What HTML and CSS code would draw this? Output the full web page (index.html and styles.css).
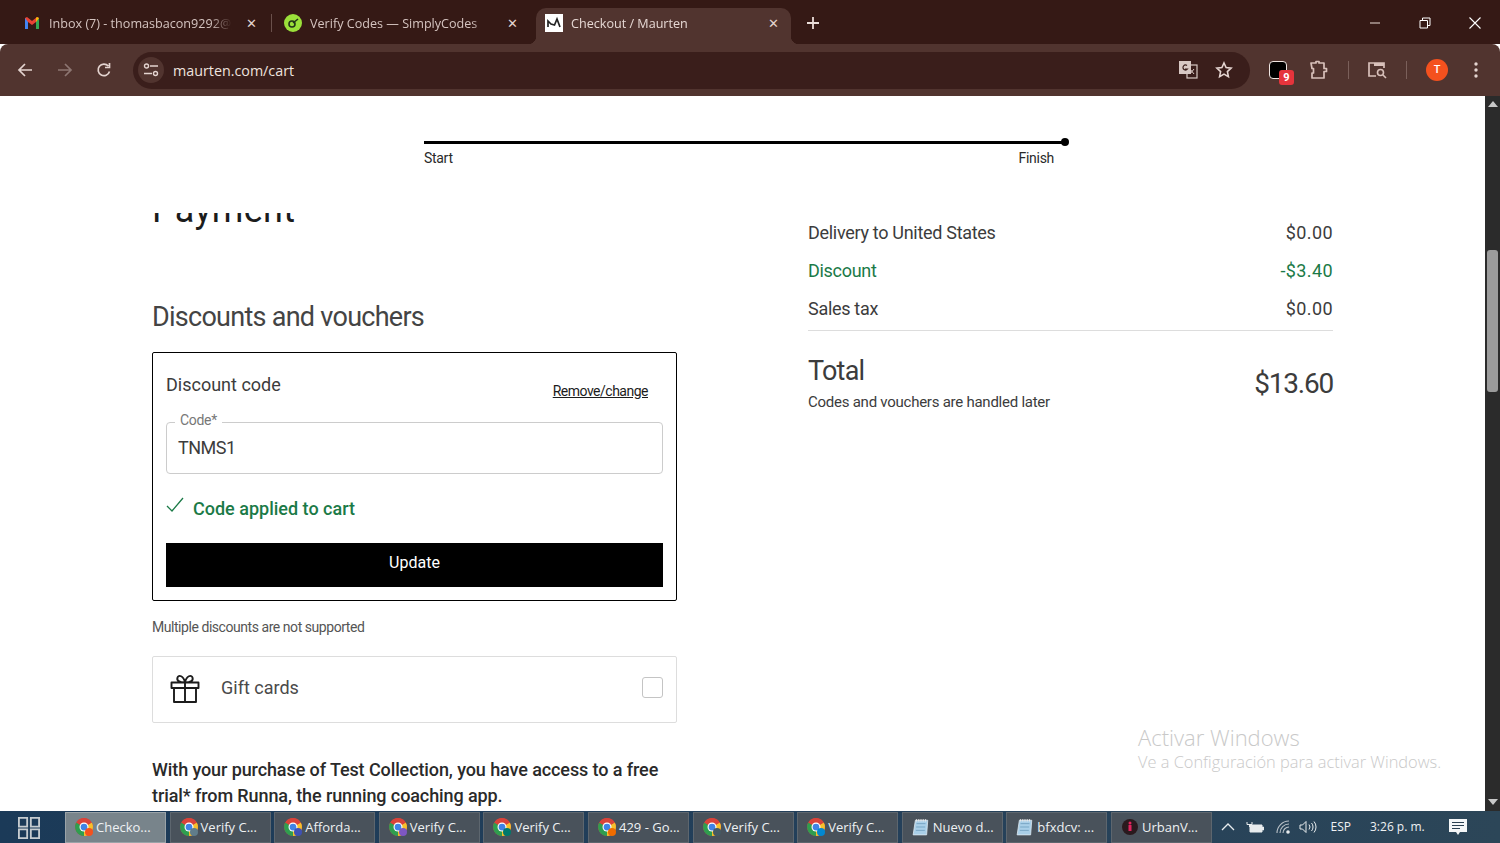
FILE: index.html
```html
<!DOCTYPE html>
<html lang="en">
<head>
  <meta charset="UTF-8">
  <meta name="viewport" content="width=device-width, initial-scale=1.0">
  <title>Checkout / Maurten</title>
  <link rel="stylesheet" href="styles.css">
</head>
<body>

  <svg class="defs" width="0" height="0">
    <symbol id="chrome-logo" viewBox="0 0 16 16">
      <circle cx="8" cy="8" r="8" fill="#d9433a"/>
      <path d="M8 8 1.1 4A8 8 0 0 0 8 16Z" fill="#2f9e4f"/>
      <path d="M8 8 8 16A8 8 0 0 0 14.9 4Z" fill="#f6c02c"/>
      <path d="M8 8 1.1 4A8 8 0 0 1 14.9 4Z" fill="#d9433a"/>
      <circle cx="8" cy="8" r="4" fill="#fff"/>
      <circle cx="8" cy="8" r="3" fill="#3f83e6"/>
    </symbol>
    <symbol id="notepad" viewBox="0 0 16 16">
      <path d="M3 2h11l-1 13H1Z" fill="#a9cfe8" stroke="#dfeaf2" stroke-width=".7"/>
      <path d="M4 5h8M3.7 8h8M3.4 11h8" stroke="#6d9cbc" stroke-width=".7"/>
      <path d="M4 1v2M6 1v2M8 1v2M10 1v2M12 1v2" stroke="#e8e8e8"/>
    </symbol>
  </svg>

  <!-- Browser chrome -->
  <div class="tabstrip">
    <div class="tab">
      <svg class="favicon" viewBox="0 0 18 18"><path d="M2 4v11h3V8l4 3 4-3v7h3V4l-2-1-5 4-5-4Z" fill="#ea4335"/><path d="M2 4v11h3V8Z" fill="#4285f4"/><path d="M16 4v11h-3V8Z" fill="#34a853"/><path d="M13 8l3-4-2-1-1 1Z" fill="#fbbc04"/></svg>
      <span class="tab-title">Inbox (7) - thomasbacon9292@gmail.com</span>
      <span class="tab-close">✕</span>
    </div>
    <span class="tab-sep"></span>
    <div class="tab">
      <svg class="favicon" viewBox="0 0 18 18"><circle cx="9" cy="9" r="9" fill="#9be03a"/><circle cx="8" cy="10" r="3" fill="none" stroke="#24331a" stroke-width="1.6"/><path d="M9 9l5-4" stroke="#24331a" stroke-width="1.6"/></svg>
      <span class="tab-title">Verify Codes — SimplyCodes</span>
      <span class="tab-close">✕</span>
    </div>
    <div class="tab tab-active">
      <svg class="favicon" viewBox="0 0 18 18"><rect width="18" height="18" fill="#fff"/><path d="M3 13V7l3 3 3.5 1L12 5l3 8" fill="none" stroke="#222" stroke-width="1.7"/></svg>
      <span class="tab-title">Checkout / Maurten</span>
      <span class="tab-close">✕</span>
    </div>
    <svg class="new-tab" width="12" height="12" viewBox="0 0 12 12"><path d="M6 0v12M0 6h12" stroke="#eadcd8" stroke-width="1.8"/></svg>
    <div class="window-controls">
      <svg width="12" height="12" viewBox="0 0 12 12"><path d="M1 6h10" stroke="#cdbcb8" stroke-width="1.2"/></svg>
      <svg width="12" height="12" viewBox="0 0 12 12"><path d="M1 3.5h7.5V11H1ZM3.5 3.5V1H11v7.5H8.5" fill="none" stroke="#fff" stroke-width="1"/></svg>
      <svg width="12" height="12" viewBox="0 0 12 12"><path d="M.5.5l11 11M11.500.5l-11 11" stroke="#fff" stroke-width="1.1"/></svg>
    </div>
  </div>

  <div class="toolbar">
    <div class="nav-icons">
      <svg width="16" height="16" viewBox="0 0 16 16"><path d="M15 8H2M8 2 2 8l6 6" fill="none" stroke="#e4d4d0" stroke-width="1.7"/></svg>
      <svg width="16" height="16" viewBox="0 0 16 16"><path d="M1 8h13M8 2l6 6-6 6" fill="none" stroke="#8d7672" stroke-width="1.7"/></svg>
      <svg width="16" height="16" viewBox="0 0 16 16"><path d="M13.500 9.500A5.800 5.800 0 1 1 12.300 4M13.500 1v4.500H9" fill="none" stroke="#e4d4d0" stroke-width="1.7"/></svg>
    </div>
    <div class="omnibox">
      <span class="site-chip">
        <svg width="16" height="14" viewBox="0 0 16 14"><circle cx="3.500" cy="3" r="2" fill="none" stroke="#e4d4d0" stroke-width="1.400"/><path d="M7 3h8M1 10.500h8" stroke="#e4d4d0" stroke-width="1.400"/><circle cx="12.500" cy="10.500" r="2" fill="none" stroke="#e4d4d0" stroke-width="1.400"/></svg>
      </span>
      <span class="url">maurten.com/cart</span>
      <svg class="translate" width="20" height="20" viewBox="0 0 20 20"><rect x="9" y="5" width="10" height="13" fill="#3a1e1b" stroke="#d8c8c4" stroke-width="1.200"/><rect x="1" y="1" width="12" height="13" fill="#d8c8c4"/><path d="M9 5.500A2.500 2.500 0 1 0 9.500 9H7" fill="none" stroke="#3a1e1b" stroke-width="1.200"/><path d="M12 9l4 5M16 9l-4 5" stroke="#d8c8c4"/></svg>
      <svg class="star" width="18" height="18" viewBox="0 0 18 18"><path d="M9 2l2.100 4.600 5 .6-3.700 3.400 1 5L9 13.100l-4.400 2.500 1-5L1.900 7.200l5-.6Z" fill="none" stroke="#e4d4d0" stroke-width="1.600"/></svg>
    </div>
    <div class="ext-icon">
      <span class="ext-box"></span>
      <span class="ext-badge">9</span>
    </div>
    <svg class="puzzle" width="20" height="20" viewBox="0 0 20 20"><path d="M2 3h5V1.500h3V3h5v5.500h2.500v3H15V18H3v-5h1.500V8.500H3Z" fill="none" stroke="#d8c0ba" stroke-width="1.700" stroke-linejoin="round"/></svg>
    <span class="tool-sep tool-sep-a"></span>
    <svg class="panel" width="20" height="18" viewBox="0 0 20 18"><path d="M9 15H2V2h15v5" fill="none" stroke="#d8c0ba" stroke-width="1.700"/><path d="M7 2h10v3H7Z" fill="#d8c0ba"/><circle cx="13.500" cy="11.500" r="3" fill="none" stroke="#d8c0ba" stroke-width="1.600"/><path d="M16 14l3 3" stroke="#d8c0ba" stroke-width="1.600"/></svg>
    <span class="tool-sep tool-sep-b"></span>
    <span class="avatar">T</span>
    <svg class="kebab" width="4" height="16" viewBox="0 0 4 16"><circle cx="2" cy="2" r="1.700" fill="#e4d4d0"/><circle cx="2" cy="8" r="1.700" fill="#e4d4d0"/><circle cx="2" cy="14" r="1.700" fill="#e4d4d0"/></svg>
  </div>

  <!-- Page -->
  <div class="viewport">
    <div class="page">

      <div class="progress">
        <div class="progress-line"></div>
        <div class="progress-labels">
          <span>Start</span>
          <span>Finish</span>
        </div>
      </div>

      <div class="checkout">
        <div class="checkout-left">
          <div class="payment-clip">
            <h1>Payment</h1>
          </div>

          <h2>Discounts and vouchers</h2>

          <div class="discount-box">
            <div class="discount-head">
              <span class="discount-title">Discount code</span>
              <a class="remove-link" href="#">Remove/change</a>
            </div>
            <div class="code-field">
              <span class="code-label">Code*</span>
              <span class="code-value">TNMS1</span>
            </div>
            <div class="code-status">
              <svg width="18" height="16" viewBox="0 0 18 16"><path d="M1 9l5 5L17 1" fill="none" stroke="#1b7a47" stroke-width="1.300"/></svg>
              <span>Code applied to cart</span>
            </div>
            <button class="update-btn">Update</button>
          </div>

          <p class="note">Multiple discounts are not supported</p>

          <div class="gift-row">
            <svg class="gift-icon" width="30" height="30" viewBox="0 0 30 30"><path d="M4 14v14h22V14M1.500 8.500h27V14h-27ZM15 8.500V28M15 8.500C9 8.500 6.500 6.500 7.500 3.500S13.500 1.500 15 8.500C16.500 1.500 21.500.5 22.500 3.500S21 8.500 15 8.500Z" fill="none" stroke="#1c1c1c" stroke-width="1.900" stroke-linejoin="round"/></svg>
            <span class="gift-label">Gift cards</span>
            <span class="gift-check"></span>
          </div>

          <p class="promo">With your purchase of Test Collection, you have access to a free<br>trial* from Runna, the running coaching app.</p>
        </div>

        <div class="checkout-right">
          <div class="summary-row"><span>Delivery to United States</span><span class="amount">$0.00</span></div>
          <div class="summary-row discount"><span>Discount</span><span class="amount">-$3.40</span></div>
          <div class="summary-row"><span>Sales tax</span><span class="amount">$0.00</span></div>
          <div class="summary-total">
            <div>
              <div class="total-label">Total</div>
              <div class="total-note">Codes and vouchers are handled later</div>
            </div>
            <div class="total-amount">$13.60</div>
          </div>
        </div>
      </div>

      <div class="activate">
        <div class="activate-title">Activar Windows</div>
        <div class="activate-text">Ve a Configuración para activar Windows.</div>
      </div>
    </div>

    <div class="scrollbar">
      <span class="arrow-up"></span>
      <span class="thumb"></span>
      <span class="arrow-down"></span>
    </div>
  </div>

  <!-- Taskbar -->
  <div class="taskbar">
    <svg class="start" width="22" height="22" viewBox="0 0 24 24"><path d="M1 1h9v9.500H1ZM14 1h9v9.500h-9ZM1 13.500h9V23H1ZM14 13.500h9V23h-9Z" fill="none" stroke="#c6ccd0" stroke-width="2"/></svg>
    <div class="task task-active"><span class="app"><svg width="18" height="18"><use href="#chrome-logo"/></svg><i style="background:#f4511e"></i></span>Checko...</div>
    <div class="task"><span class="app"><svg width="18" height="18"><use href="#chrome-logo"/></svg><i style="background:#607d8b"></i></span>Verify C...</div>
    <div class="task"><span class="app"><svg width="18" height="18"><use href="#chrome-logo"/></svg><i style="background:#3f51b5"></i></span>Afforda...</div>
    <div class="task"><span class="app"><svg width="18" height="18"><use href="#chrome-logo"/></svg><i style="background:#7e57c2"></i></span>Verify C...</div>
    <div class="task"><span class="app"><svg width="18" height="18"><use href="#chrome-logo"/></svg><i style="background:#00796b"></i></span>Verify C...</div>
    <div class="task"><span class="app"><svg width="18" height="18"><use href="#chrome-logo"/></svg><i style="background:#ef6c00"></i></span>429 - Go...</div>
    <div class="task"><span class="app"><svg width="18" height="18"><use href="#chrome-logo"/></svg><i style="background:#455a64"></i></span>Verify C...</div>
    <div class="task"><span class="app"><svg width="18" height="18"><use href="#chrome-logo"/></svg><i style="background:#0288d1"></i></span>Verify C...</div>
    <div class="task"><span class="app"><svg width="18" height="18"><use href="#notepad"/></svg></span>Nuevo d...</div>
    <div class="task"><span class="app"><svg width="18" height="18"><use href="#notepad"/></svg></span>bfxdcv: ...</div>
    <div class="task"><span class="app"><svg width="18" height="18" viewBox="0 0 18 18"><circle cx="9" cy="9" r="8" fill="#2a1a1e"/><rect x="7.500" y="7" width="3" height="6" fill="#e0245e"/><circle cx="9" cy="5" r="1.500" fill="#e0245e"/></svg></span>UrbanV...</div>
    <div class="tray">
      <svg class="tray-chevron" width="14" height="8" viewBox="0 0 14 8"><path d="M1 7l6-6 6 6" fill="none" stroke="#e8ecee" stroke-width="1.300"/></svg>
      <svg class="tray-battery" width="18" height="12" viewBox="0 0 18 12"><path d="M4 4h12v7H4Z" fill="#e8ecee" stroke="#e8ecee"/><path d="M16.500 6h1v3h-1ZM1 1v2.500h5V1M3.500 3.500V6" fill="none" stroke="#e8ecee"/></svg>
      <svg class="tray-wifi" width="16" height="14" viewBox="0 0 16 14"><path d="M1 13A12 12 0 0 1 13 1M4 13a9 9 0 0 1 9-9M7 13a6 6 0 0 1 6-6" fill="none" stroke="#b9c2c8" stroke-width="1.100"/><circle cx="12" cy="12" r="1.800" fill="#e8ecee"/></svg>
      <svg class="tray-volume" width="18" height="14" viewBox="0 0 18 14"><path d="M1 5h2.500L7 1.500v11L3.500 9H1Z" fill="none" stroke="#e8ecee"/><path d="M10 4.500a4 4 0 0 1 0 5M12.500 3a6 6 0 0 1 0 8M15 1.500a8.500 8.500 0 0 1 0 11" fill="none" stroke="#e8ecee"/></svg>
      <span class="tray-lang">ESP</span>
      <span class="tray-time">3:26 p. m.</span>
      <svg class="tray-notes" width="18" height="18" viewBox="0 0 18 18"><path d="M0 1h18v13h-7l-2 3-2-3H0Z" fill="#f4f6f7"/><path d="M3 4.500h12M3 7.500h12M3 10.500h8" stroke="#2a3f50" stroke-width="1.200"/></svg>
    </div>
  </div>

</body>
</html>
```

FILE: styles.css
```css
* {
  box-sizing: border-box;
}
html, body {
  height: 100%;
}
body {
  display: flex;
  flex-direction: column;
  margin: 0;
  height: 843px;
  overflow: hidden;
  font-family: Roboto, Arial, sans-serif;
  color: #3c3c3c;
  background: #fff;
}
.defs {
  position: absolute;
}

/* Tab strip */
.tabstrip {
  display: flex;
  align-items: flex-end;
  flex: 0 0 44px;
  padding-left: 14px;
  background: #351915;
  font-family: "Open Sans", Arial, sans-serif;
}
.tab {
  display: flex;
  align-items: center;
  width: 255px;
  height: 36px;
  margin-right: 6px;
  padding: 0 0 6px 9px;
  color: #d5c4c0;
  font-size: 12.600px;
}
.favicon {
  flex: 0 0 18px;
  width: 18px;
  height: 18px;
  margin-right: 8px;
}
.tab-title {
  width: 183px;
  overflow: hidden;
  white-space: nowrap;
  -webkit-mask-image: linear-gradient(to right, #000 88%, transparent);
  mask-image: linear-gradient(to right, #000 88%, transparent);
}
.tab-close {
  width: 12px;
  margin-left: 13px;
  color: #e4d4d0;
  font-size: 13px;
  line-height: 1;
  text-align: center;
}
.tab-sep {
  width: 1px;
  height: 18px;
  margin: 0 3px 12px -4px;
  background: #6a504b;
}
.tab-active {
  position: relative;
  background: #51342f;
  border-radius: 10px 10px 0 0;
  color: #e6d8d4;
}
.tab-active::before,
.tab-active::after {
  content: "";
  position: absolute;
  bottom: 0;
  width: 8px;
  height: 8px;
}
.tab-active::before {
  left: -8px;
  background: radial-gradient(circle at 0 0, transparent 8px, #51342f 8.5px);
}
.tab-active::after {
  right: -8px;
  background: radial-gradient(circle at 100% 0, transparent 8px, #51342f 8.5px);
}
.new-tab {
  margin: 0 0 15px 10px;
}
.window-controls {
  display: flex;
  gap: 38px;
  margin: 0 19px 15px auto;
}

/* Toolbar */
.toolbar {
  display: flex;
  align-items: center;
  flex: 0 0 52px;
  padding-left: 17px;
  background: #51342f;
  border-radius: 8px 8px 0 0;
}
.nav-icons {
  display: flex;
  gap: 23.500px;
}
.omnibox {
  display: flex;
  align-items: center;
  width: 1117px;
  height: 37px;
  margin-left: 21px;
  padding-left: 5px;
  background: #3a1e1b;
  border-radius: 19px;
}
.site-chip {
  display: flex;
  align-items: center;
  justify-content: center;
  width: 26px;
  height: 26px;
  background: #51342f;
  border-radius: 50%;
}
.url {
  margin-left: 9px;
  color: #efe3df;
  font-family: "Open Sans", Arial, sans-serif;
  font-size: 14.300px;
}
.translate {
  margin-left: auto;
}
.star {
  margin: 0 17px 0 17px;
}
.ext-icon {
  position: relative;
  width: 18px;
  height: 18px;
  margin-left: 19px;
}
.ext-box {
  display: block;
  width: 18px;
  height: 18px;
  background: #000;
  border: 1.500px solid #f0e6e3;
  border-radius: 4px;
}
.ext-badge {
  position: absolute;
  top: 9px;
  left: 10px;
  width: 15px;
  height: 15px;
  background: #e5343c;
  border-radius: 3px;
  color: #fff;
  font-size: 11px;
  font-weight: 700;
  line-height: 15px;
  text-align: center;
}
.puzzle {
  margin-left: 22px;
}
.tool-sep {
  width: 1px;
  height: 18px;
  background: #7a5f5a;
}
.tool-sep-a {
  margin-left: 19px;
}
.panel {
  margin-left: 18px;
}
.tool-sep-b {
  margin-left: 19px;
}
.avatar {
  width: 22px;
  height: 22px;
  margin-left: 19px;
  background: #f4511e;
  border-radius: 50%;
  color: #fff;
  font-size: 11px;
  font-weight: 500;
  line-height: 22px;
  text-align: center;
}
.kebab {
  margin-left: 26px;
}

/* Viewport */
.viewport {
  display: flex;
  flex: 0 0 715px;
  overflow: hidden;
}
.page {
  position: relative;
  flex: 1;
  overflow: hidden;
}
.scrollbar {
  display: flex;
  flex-direction: column;
  align-items: center;
  flex: 0 0 15px;
  padding: 5px 0 6px;
  background: #2b2b2b;
}
.arrow-up {
  border: 5px solid transparent;
  border-top: 0;
  border-bottom: 6px solid #c8c8c8;
}
.arrow-down {
  margin-top: auto;
  border: 5px solid transparent;
  border-bottom: 0;
  border-top: 6px solid #c8c8c8;
}
.thumb {
  width: 11px;
  height: 142px;
  margin-top: 143px;
  background: #9b9b9b;
  border-radius: 3px;
}

/* Progress */
.progress {
  height: 116px;
  padding: 45px 0 0 424px;
}
.progress-line {
  position: relative;
  width: 641px;
  height: 3px;
  background: #000;
}
.progress-line::after {
  content: "";
  position: absolute;
  top: -3px;
  right: -4px;
  width: 8px;
  height: 8px;
  background: #000;
  border-radius: 50%;
}
.progress-labels {
  display: flex;
  justify-content: space-between;
  width: 630px;
  margin-top: 5px;
  color: #2a2a2a;
  font-size: 14px;
  line-height: 18px;
  letter-spacing: -0.3px;
}

/* Checkout columns */
.checkout {
  display: flex;
  gap: 131px;
  padding-left: 152px;
}
.checkout-left,
.checkout-right {
  flex: 0 0 525px;
}
.payment-clip {
  display: flex;
  align-items: flex-end;
  height: 20px;
  margin-top: 1px;
  overflow: hidden;
}
h1 {
  flex-shrink: 0;
  margin: 0 0 3px;
  color: #1c1c1c;
  font-size: 36px;
  font-weight: 400;
  line-height: 40px;
  letter-spacing: 0.3px;
}
h2 {
  margin: 67px 0 18px;
  color: #444;
  font-size: 27px;
  font-weight: 400;
  line-height: 34px;
  letter-spacing: -0.73px;
}
.discount-box {
  height: 249px;
  padding: 14px 13px 13px;
  border: 1px solid #000;
  border-radius: 2px;
}
.discount-head {
  display: flex;
  justify-content: space-between;
}
.discount-title {
  font-size: 18px;
  line-height: 36px;
}
.remove-link {
  margin: 14px 15px 0 0;
  color: #1c1c1c;
  font-size: 14px;
  line-height: 20px;
  letter-spacing: -0.5px;
}
.code-field {
  position: relative;
  height: 52px;
  margin-top: 19px;
  padding: 0 11px;
  border: 1px solid #ccc;
  border-radius: 4px;
  font-size: 18px;
  line-height: 50px;
  letter-spacing: -0.5px;
}
.code-label {
  position: absolute;
  top: -12px;
  left: 8px;
  padding: 0 5px;
  background: #fff;
  color: #777;
  font-size: 14px;
  line-height: 18px;
  letter-spacing: -0.3px;
}
.code-status {
  display: flex;
  gap: 9px;
  height: 24px;
  margin-top: 23px;
  color: #1b7a47;
  font-size: 18px;
  font-weight: 500;
  line-height: 24px;
}
.update-btn {
  display: block;
  width: 100%;
  height: 44px;
  margin-top: 22px;
  padding-bottom: 6px;
  background: #000;
  border: none;
  color: #fff;
  font-family: inherit;
  font-size: 16px;
  font-weight: 400;
  cursor: pointer;
}
.note {
  margin: 16px 0 19px;
  color: #555;
  font-size: 14px;
  line-height: 20px;
  letter-spacing: -0.45px;
}
.gift-row {
  display: flex;
  align-items: center;
  height: 67px;
  padding: 0 13px 4px 17px;
  border: 1px solid #ddd;
  border-radius: 2px;
}
.gift-icon {
  margin-top: 2px;
}
.gift-label {
  margin-left: 21px;
  color: #4a4a4a;
  font-size: 18px;
}
.gift-check {
  width: 21px;
  height: 21px;
  margin-left: auto;
  border: 1px solid #c4c4c4;
  border-radius: 3px;
}
.promo {
  margin: 34px 0 0;
  color: #2a2a2a;
  font-size: 18px;
  font-weight: 500;
  line-height: 26px;
  letter-spacing: -0.1px;
}

/* Order summary */
.checkout-right {
  padding-top: 2px;
}
.summary-row {
  display: flex;
  justify-content: space-between;
  font-size: 18px;
  line-height: 38px;
  letter-spacing: -0.3px;
}
.amount {
  letter-spacing: 0.4px;
}
.discount {
  color: #1b7a47;
}
.summary-total {
  display: flex;
  align-items: center;
  justify-content: space-between;
  margin-top: 2px;
  padding-top: 22px;
  border-top: 1px solid #ddd;
}
.total-label {
  font-size: 27px;
  line-height: 36px;
  letter-spacing: -0.8px;
}
.total-note {
  margin-top: 2px;
  font-size: 15px;
  line-height: 22px;
  letter-spacing: -0.25px;
}
.total-amount {
  font-size: 28px;
  letter-spacing: -1.2px;
}

/* Watermark */
.activate {
  position: absolute;
  top: 626px;
  left: 1138px;
  color: #c9c9c9;
  font-family: "Open Sans", Arial, sans-serif;
  font-weight: 300;
  white-space: nowrap;
}
.activate-title {
  font-size: 22px;
  line-height: 30px;
}
.activate-text {
  font-size: 16.400px;
  line-height: 20px;
}

/* Taskbar */
.taskbar {
  display: flex;
  align-items: stretch;
  flex: 0 0 32px;
  padding-top: 1px;
  background: linear-gradient(to right, #1b3a58, #24405a 60%, #2c4658);
  color: #eef1f3;
  font-family: "Open Sans", Arial, sans-serif;
  font-size: 13px;
}
.start {
  align-self: center;
  margin: 0 25px 0 18px;
}
.task {
  display: flex;
  align-items: center;
  flex: 0 0 101px;
  margin-right: 3.600px;
  padding: 0 0 2px 9px;
  background: #49525b;
  border: 1px solid #5d666e;
  white-space: nowrap;
}
.task-active {
  background: #78848b;
  border-color: #9aa3a8;
}
.app {
  position: relative;
  display: flex;
  margin-right: 3px;
}
.app i {
  position: absolute;
  right: 0;
  bottom: 0;
  width: 8px;
  height: 8px;
  border-radius: 50%;
}
.tray {
  display: flex;
  align-items: center;
  margin-left: 5px;
  padding-bottom: 2px;
  font-size: 12px;
}
.tray-chevron {
  margin-left: 0;
}
.tray-battery {
  margin-left: 11px;
}
.tray-wifi {
  margin-left: 12px;
}
.tray-volume {
  margin-left: 7px;
}
.tray-lang {
  margin-left: 14px;
}
.tray-time {
  margin-left: 19px;
}
.tray-notes {
  margin-left: 24px;
}
```
